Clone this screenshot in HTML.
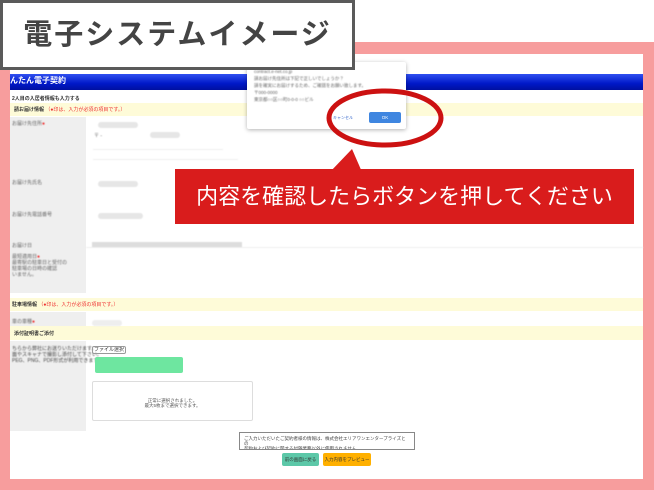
<!DOCTYPE html>
<html><head><meta charset="utf-8"><style>
*{margin:0;padding:0;box-sizing:border-box}
body{width:654px;height:490px;position:relative;overflow:hidden;background:#fff;font-family:"Liberation Sans","Noto Sans CJK JP",sans-serif}
.a{position:absolute}
.t{font-size:5px;color:#666;white-space:nowrap}
.blur{filter:blur(0.6px)}
.pill{background:#e6e6e6;border-radius:3px;height:6px}
</style></head><body>
<div class="a" style="left:0;top:42px;width:654px;height:448px;background:#f79d9d"></div>
<div class="a" style="left:10px;top:54px;width:633px;height:425px;background:#fff"></div>
<div class="a" style="left:355px;top:64px;width:50px;height:8px;background:#eee"></div>
<div class="a" style="left:10px;top:74px;width:633px;height:16px;background:linear-gradient(#3050f0,#0018c8 60%,#0010a0);"></div>
<div class="a" style="left:10px;top:75px;color:#fff;font-size:8px;font-weight:bold">んたん電子契約</div>
<div class="a t" style="left:12px;top:95px;color:#333;font-weight:bold">2人目の入居者情報も入力する</div>
<div class="a" style="left:10px;top:103px;width:633px;height:13px;background:#fefbd8"></div>
<div class="a t" style="left:14px;top:106px;color:#333;font-weight:bold">請お届け情報 <span style="color:#e33;font-weight:normal">（●印は、入力が必須の項目です。）</span></div>
<div class="a" style="left:10px;top:298px;width:633px;height:13px;background:#fefbd8"></div>
<div class="a t" style="left:12px;top:301px;color:#333;font-weight:bold">駐車場情報 <span style="color:#e33;font-weight:normal">（●印は、入力が必須の項目です。）</span></div>
<div class="a" style="left:10px;top:326px;width:633px;height:14px;background:#fefbd8"></div>
<div class="a t" style="left:14px;top:330px;color:#333;font-weight:bold">添付証明書ご添付</div>
<div class="a" style="left:10px;top:117px;width:76px;height:176px;background:#efefef"></div>
<div class="a" style="left:10px;top:312px;width:76px;height:14px;background:#efefef"></div>
<div class="a" style="left:10px;top:341px;width:76px;height:90px;background:#efefef"></div>
<div class="blur">
<div class="a t" style="left:12px;top:120px">お届け先住所<span style="color:#e33">●</span></div>
<div class="a t" style="left:12px;top:179px">お届け先氏名</div>
<div class="a t" style="left:12px;top:211px">お届け先電話番号</div>
<div class="a t" style="left:12px;top:242px">お届け日</div>
<div class="a t" style="left:12px;top:254px;line-height:6px">最短適用日<span style="color:#e33">●</span><br>最寄駅の駐車日と受付の<br>駐車場の日時の確認<br>いません。</div>
<div class="a t" style="left:12px;top:318px">車の車種<span style="color:#e33">●</span></div>
<div class="a t" style="left:12px;top:346px;line-height:6px;color:#444">ちらから弊社にお送りいただけます。<br>面やスキャナで撮影し添付して下さい。<br>PEG、PNG、PDF形式が利用できます</div>
<div class="a pill" style="left:98px;top:122px;width:40px"></div>
<div class="a pill" style="left:150px;top:132px;width:30px"></div>
<div class="a t" style="left:94px;top:132px">〒 -</div>
<div class="a" style="left:93px;top:143px;width:130px;height:7px;border-bottom:1px solid #eee"></div>
<div class="a" style="left:93px;top:153px;width:145px;height:7px;border-bottom:1px solid #eee"></div>
<div class="a pill" style="left:98px;top:181px;width:40px"></div>
<div class="a pill" style="left:98px;top:213px;width:45px"></div>
<div class="a" style="left:92px;top:242px;width:150px;height:5px;background:#ddd"></div>
<div class="a" style="left:86px;top:247px;width:557px;height:1px;background:#eee"></div>
<div class="a pill" style="left:92px;top:320px;width:30px;background:#eee"></div>
</div>
<div class="a" style="left:92px;top:346px;width:34px;height:8px;border:1px solid #999;border-radius:2px;font-size:5px;text-align:center;line-height:6px;color:#333;white-space:nowrap;overflow:hidden">ファイル選択</div>
<div class="a" style="left:95px;top:357px;width:88px;height:16px;background:#6ee6a0;border-radius:2px"></div>
<div class="a" style="left:92px;top:381px;width:161px;height:40px;border:1px solid #ddd;border-radius:2px;font-size:4.5px;color:#555;text-align:center;padding-top:16px;line-height:5px">正常に選択されました。<br>最大5枚まで選択できます。</div>
<div class="a" style="left:239px;top:432px;width:176px;height:18px;border:1px solid #888;font-size:4.5px;color:#444;padding:3px 4px;line-height:5px;overflow:hidden">ご入力いただいたご契約者様の情報は、株式会社エリアワンエンタープライズとの<br>契約および契約に関する付随業務以外に使用されません。</div>
<div class="a" style="left:282px;top:453px;width:37px;height:13px;background:#5cc8a8;border-radius:2px;font-size:4.5px;color:#333;text-align:center;line-height:13px">前の画面に戻る</div>
<div class="a" style="left:323px;top:453px;width:48px;height:13px;background:#ffb000;border-radius:2px;font-size:4.5px;color:#333;text-align:center;line-height:13px">入力内容をプレビュー</div>
<div class="a" style="left:247px;top:62px;width:159px;height:67px;background:#fff;box-shadow:0 1px 4px rgba(0,0,0,.3);border-radius:2px"></div>
<div class="a t blur" style="left:254px;top:68px;font-size:4.5px;line-height:7px">contract.e-net.co.jp<br>請お届け先住所は下記で正しいでしょうか？<br>請を確実にお届けするため、ご確認をお願い致します。<br>〒000-0000<br>東京都○○区○○町0-0-0 ○○ビル</div>
<div class="a" style="left:333px;top:115px;font-size:4px;color:#36c">キャンセル</div>
<div class="a" style="left:369px;top:112px;width:32px;height:11px;background:#3f86e0;border-radius:2px;color:#fff;font-size:4.5px;text-align:center;line-height:11px">OK</div>
<svg class="a" style="left:0;top:0" width="654" height="490">
<ellipse cx="385" cy="118" rx="56" ry="27" fill="none" stroke="#cc1111" stroke-width="5"/>
<polygon points="330,172 352,149 362,172" fill="#d91c1c"/>
</svg>
<div class="a" style="left:175px;top:169px;width:459px;height:55px;background:#d91c1c;color:#fff;font-size:22px;text-align:center;line-height:55px;white-space:nowrap">内容を確認したらボタンを押してください</div>
<div class="a" style="left:0;top:0;width:355px;height:70px;background:#fff;border:3px solid #5a5a5a;font-size:29px;color:#444;font-weight:bold;text-align:center;line-height:64px;letter-spacing:2px;white-space:nowrap">電子システムイメージ</div>
</body></html>
